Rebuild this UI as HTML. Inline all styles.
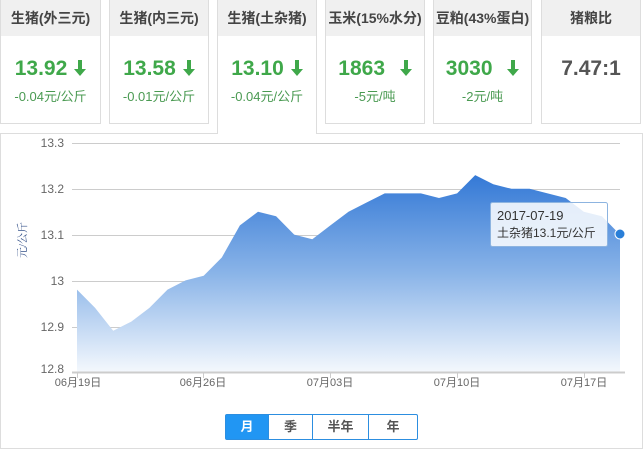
<!DOCTYPE html>
<html><head><meta charset="utf-8"><style>
body{margin:0;width:643px;height:452px;background:#fff;font-family:"Liberation Sans","Noto Sans CJK SC",sans-serif;position:relative;overflow:hidden}
.card{position:absolute;top:0;height:124px;border:1px solid #ddd;border-top:none;background:#fff;box-sizing:border-box}
.card .h{height:36px;background:#f0f0f0;text-align:center;line-height:36px;font-size:14px;font-weight:bold;color:#444}
.card .v{text-align:center;font-size:21px;font-weight:bold;color:#3fa84a;margin-top:20px;line-height:26px}
.card .v svg{vertical-align:-1px;margin-left:7px}
.card .s{text-align:center;font-size:13px;color:#4a9a52;margin-top:4px}
.panel{position:absolute;left:0;top:133px;width:643px;height:316px;border:1px solid #ddd;box-sizing:border-box}
.btns{position:absolute;left:225px;top:414px;height:26px;display:flex;border:1px solid #2c8ee0;border-radius:2px;box-sizing:border-box}
.btns div{height:24px;line-height:24px;text-align:center;font-size:13px;font-weight:bold;color:#555;border-left:1px solid #2c8ee0}
</style></head><body>
<div class="card" style="left:0;width:101px"><div class="h">生猪(外三元)</div><div class="v">13.92<svg width="12" height="16" viewBox="0 0 12 16"><path d="M4 0h4v9h4l-6 7-6-7h4z" fill="#3fa84a"/></svg></div><div class="s">-0.04元/公斤</div></div>
<div class="card" style="left:109px;width:100px"><div class="h">生猪(内三元)</div><div class="v">13.58<svg width="12" height="16" viewBox="0 0 12 16"><path d="M4 0h4v9h4l-6 7-6-7h4z" fill="#3fa84a"/></svg></div><div class="s">-0.01元/公斤</div></div>
<div class="card" style="left:217px;width:100px;height:134px;border-bottom:none;z-index:2"><div class="h">生猪(土杂猪)</div><div class="v">13.10<svg width="12" height="16" viewBox="0 0 12 16"><path d="M4 0h4v9h4l-6 7-6-7h4z" fill="#3fa84a"/></svg></div><div class="s">-0.04元/公斤</div></div>
<div class="card" style="left:325px;width:100px"><div class="h">玉米(15%水分)</div><div class="v">1863 &nbsp;<svg width="12" height="16" viewBox="0 0 12 16" style="margin-left:3px"><path d="M4 0h4v9h4l-6 7-6-7h4z" fill="#3fa84a"/></svg></div><div class="s">-5元/吨</div></div>
<div class="card" style="left:433px;width:99px"><div class="h">豆粕(43%蛋白)</div><div class="v">3030 &nbsp;<svg width="12" height="16" viewBox="0 0 12 16" style="margin-left:3px"><path d="M4 0h4v9h4l-6 7-6-7h4z" fill="#3fa84a"/></svg></div><div class="s">-2元/吨</div></div>
<div class="card" style="left:541px;width:100px"><div class="h">猪粮比</div><div class="v" style="color:#555">7.47:1</div></div>
<div class="panel"></div>
<svg style="position:absolute;left:0;top:0" width="643" height="452">
<defs><linearGradient id="g" gradientUnits="userSpaceOnUse" x1="0" y1="175" x2="0" y2="372"><stop offset="0" stop-color="#3479d6"/><stop offset="0.5" stop-color="#8ab4e8"/><stop offset="1" stop-color="#f4f8fd"/></linearGradient></defs>
<g stroke="#ccc" stroke-width="1">
<line x1="72" y1="143.5" x2="620" y2="143.5"/><line x1="72" y1="189.5" x2="620" y2="189.5"/><line x1="72" y1="235.5" x2="620" y2="235.5"/><line x1="72" y1="281.5" x2="620" y2="281.5"/><line x1="72" y1="327.5" x2="620" y2="327.5"/>
</g>
<polygon fill="url(#g)" points="77,372 77,289.6 95.1,307.9 113.2,330.8 131.3,321.6 149.4,307.9 167.5,289.6 185.6,280.4 203.7,275.8 221.8,257.5 239.9,225.4 258,211.7 276.1,216.3 294.2,234.6 312.3,239.2 330.4,225.4 348.5,211.7 366.6,202.5 384.7,193.4 402.8,193.4 420.9,193.4 439,198 457.1,193.4 475.2,175.1 493.3,184.2 511.4,188.8 529.5,188.8 547.6,193.4 565.7,198 583.8,211.7 601.9,216.3 620,234.6 620,372"/>
<line x1="72" y1="372.5" x2="625" y2="372.5" stroke="#ccc" stroke-width="2"/>
<g stroke="#ccc"><line x1="77.5" y1="372" x2="77.5" y2="378"/><line x1="203.5" y1="372" x2="203.5" y2="378"/><line x1="330.5" y1="372" x2="330.5" y2="378"/><line x1="457.5" y1="372" x2="457.5" y2="378"/><line x1="584.5" y1="372" x2="584.5" y2="378"/></g>
<circle cx="620" cy="234" r="5" fill="#2a7fd8" stroke="#fff" stroke-width="1"/>
<g font-size="12" fill="#666" text-anchor="end" font-family="Liberation Sans, sans-serif">
<text x="64" y="147">13.3</text><text x="64" y="193">13.2</text><text x="64" y="239">13.1</text><text x="64" y="285">13</text><text x="64" y="331">12.9</text><text x="64" y="373">12.8</text></g>
<g font-size="11" fill="#666" text-anchor="middle" font-family="Liberation Sans, Noto Sans CJK SC, sans-serif">
<text x="78" y="386">06月19日</text><text x="203" y="386">06月26日</text><text x="330" y="386">07月03日</text><text x="457" y="386">07月10日</text><text x="584" y="386">07月17日</text></g>
<text transform="translate(26,258) rotate(-90)" font-size="11" fill="#35528a" font-family="Liberation Serif, Noto Serif CJK SC, serif">元/公斤</text>
<rect x="490.5" y="202.5" width="117" height="44" rx="2" fill="#fff" fill-opacity="0.85" stroke="#8db4e0"/>
<text x="497" y="220" font-size="13" fill="#333" font-family="Liberation Sans, sans-serif">2017-07-19</text>
<text x="497" y="237" font-size="12" fill="#333" font-family="Liberation Sans, Noto Sans CJK SC, sans-serif">土杂猪13.1元/公斤</text>
</svg>
<div class="btns"><div style="width:42px;border-left:none;background:#2196f3;color:#fff">月</div><div style="width:43px">季</div><div style="width:55px">半年</div><div style="width:48px">年</div></div>
</body></html>
